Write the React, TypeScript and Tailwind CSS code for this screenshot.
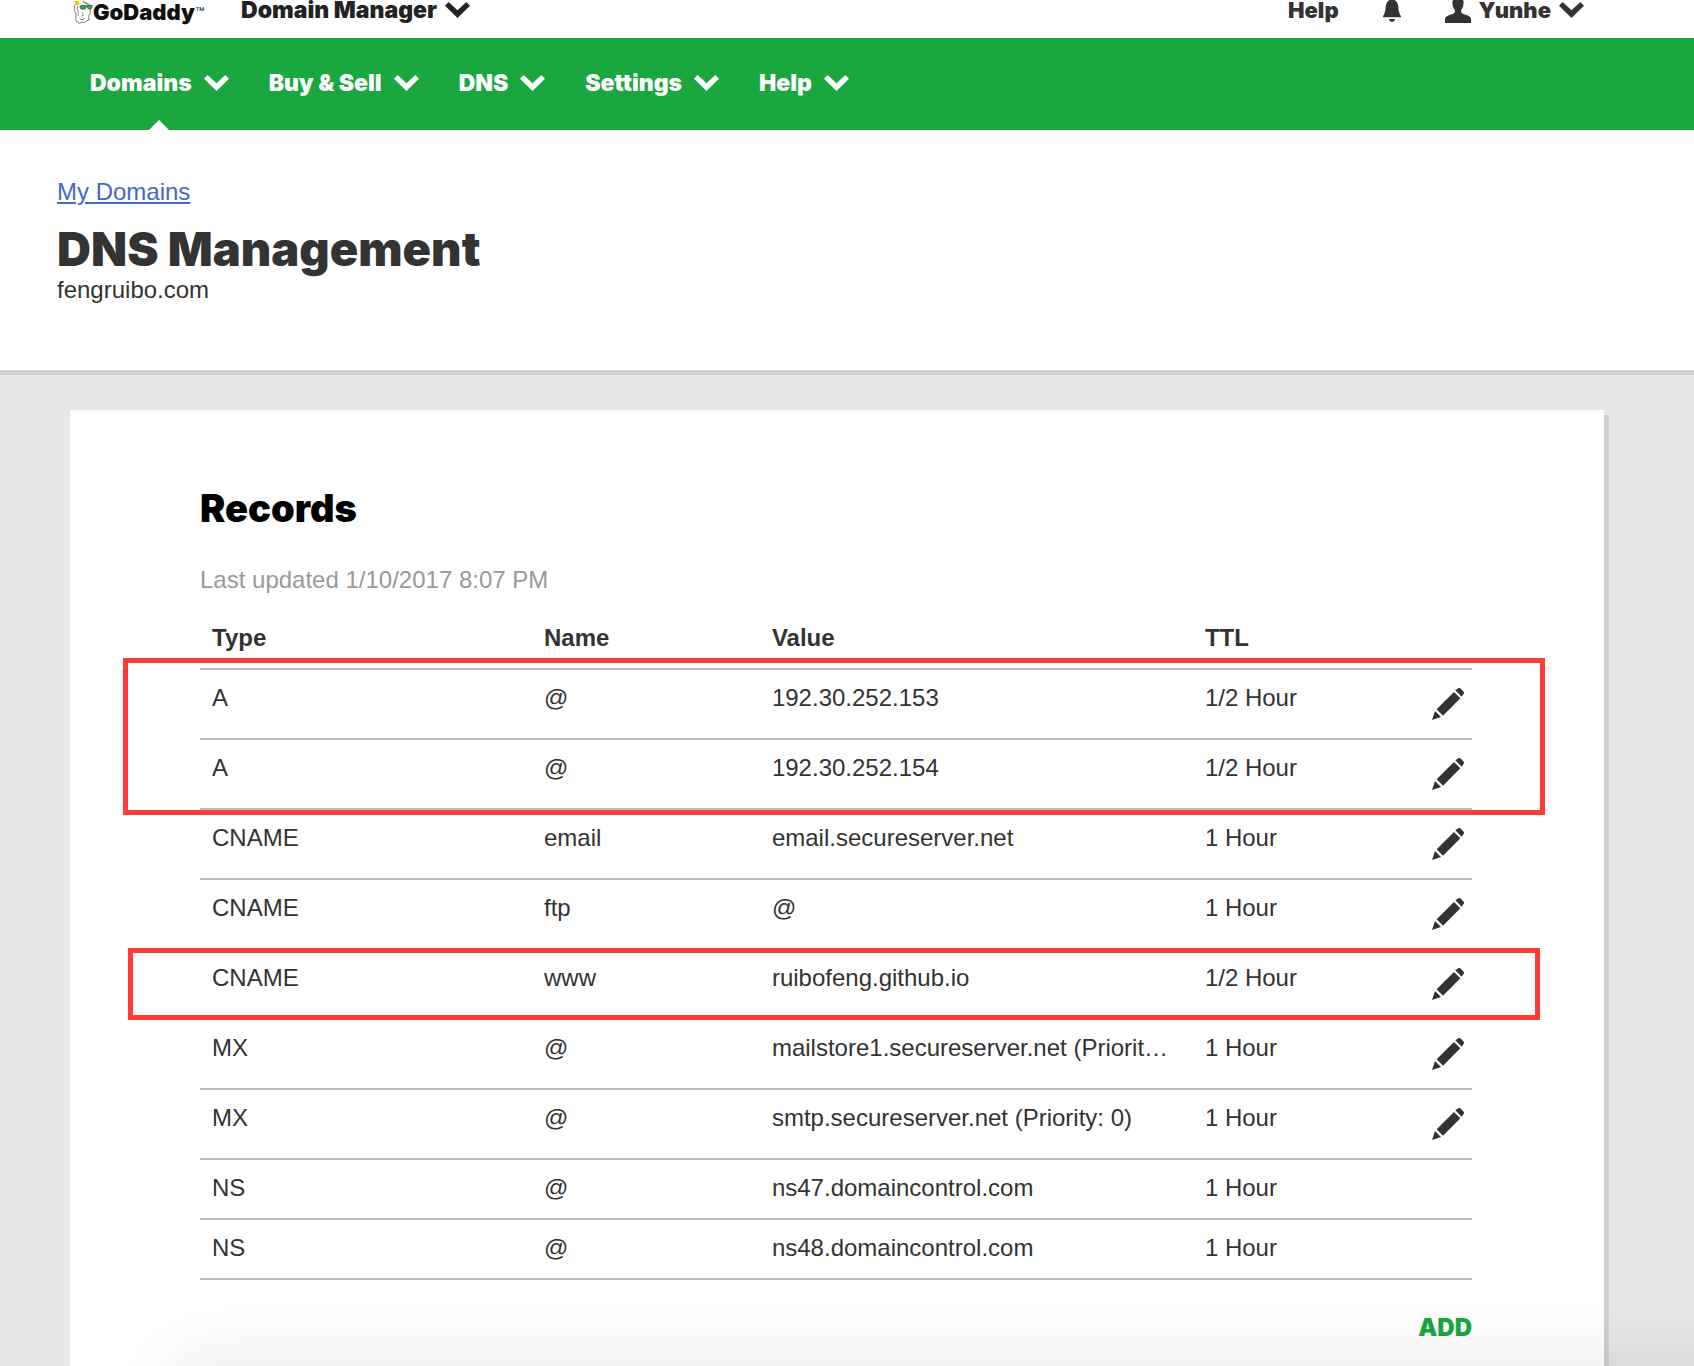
type DnsRecord = {
  type: string;
  name: string;
  value: string;
  ttl: string;
  editable: boolean;
};

const records: DnsRecord[] = [
  { type: "A", name: "@", value: "192.30.252.153", ttl: "1/2 Hour", editable: true },
  { type: "A", name: "@", value: "192.30.252.154", ttl: "1/2 Hour", editable: true },
  { type: "CNAME", name: "email", value: "email.secureserver.net", ttl: "1 Hour", editable: true },
  { type: "CNAME", name: "ftp", value: "@", ttl: "1 Hour", editable: true },
  { type: "CNAME", name: "www", value: "ruibofeng.github.io", ttl: "1/2 Hour", editable: true },
  { type: "MX", name: "@", value: "mailstore1.secureserver.net (Priority: 10)", ttl: "1 Hour", editable: true },
  { type: "MX", name: "@", value: "smtp.secureserver.net (Priority: 0)", ttl: "1 Hour", editable: true },
  { type: "NS", name: "@", value: "ns47.domaincontrol.com", ttl: "1 Hour", editable: false },
  { type: "NS", name: "@", value: "ns48.domaincontrol.com", ttl: "1 Hour", editable: false },
];

const navItems = ["Domains", "Buy & Sell", "DNS", "Settings", "Help"];

function Chevron() {
  return (
    <svg viewBox="0 0 75 48" className="h-4 w-[25px] shrink-0" fill="currentColor" aria-hidden="true">
      <path d="M0 11 11 0 37.500 25 64 0 75 11 37.500 48Z" />
    </svg>
  );
}

function Pencil() {
  return (
    <svg viewBox="0 0 96 96" className="size-8" fill="currentColor" aria-hidden="true">
      <path d="M66 12 85 31 33 83 14 64Z" />
      <path d="M79 1Q82-2 85 1L95 11Q98 14 95 17L89 26 70 7Z" />
      <path d="M0 96 9 69 27 87Z" />
    </svg>
  );
}

function Bell() {
  return (
    <svg viewBox="0 0 54 72" className="h-6 w-[18px]" fill="currentColor" aria-hidden="true">
      <path d="M27 0Q32 0 32 5Q44 10 46 26Q47 46 54 54V58H0V54Q7 46 8 26Q10 10 22 5Q22 0 27 0Z" />
      <path d="M17 63H37Q34 72 27 72Q20 72 17 63Z" />
    </svg>
  );
}

function Person() {
  return (
    <svg viewBox="0 0 78 75" className="h-[25px] w-[26px]" fill="currentColor" aria-hidden="true">
      <path d="M39 0Q56 0 56 14Q56 26 49 35Q47 40 50 45Q53 48 64 51Q78 55 78 64V75H0V64Q0 55 14 51Q25 48 28 45Q31 40 29 35Q22 26 22 14Q22 0 39 0Z" />
    </svg>
  );
}

function Mascot() {
  return (
    <svg viewBox="0 0 60 69" className="h-[23px] w-5" aria-hidden="true">
      <path
        d="M8 8Q2 14 5 22Q1 26 6 32L9 40 8 56Q12 65 20 67L26 63 34 65 39 60 48 57 47 44Q54 38 52 28L50 14 36 6 26-3H10Z"
        fill="#fff"
        stroke="#777"
        strokeWidth="3"
        strokeLinejoin="round"
      />
      <path d="M14 14Q10 24 16 32L15 44M27 34 31 43 25 46M20 54Q28 59 36 52M33 3Q42 4 48 10" fill="none" stroke="#888" strokeWidth="3" />
      <path d="M9-3 13 1 19-3 18 5 24 9 15 11 7 12 7 5 2 2Z" fill="#f5c518" />
      <path d="M20 17 58 14" stroke="#1d5c2c" strokeWidth="4" />
      <ellipse cx="30" cy="19" rx="9" ry="6" fill="#27b24a" stroke="#1d5c2c" strokeWidth="2" />
      <ellipse cx="50" cy="18" rx="7" ry="6" fill="#27b24a" stroke="#1d5c2c" strokeWidth="2" />
    </svg>
  );
}

export default function App() {
  return (
    <div className="relative flex min-h-screen flex-col overflow-hidden bg-[#e7e7e7] font-['Liberation_Sans',Arial,sans-serif] text-2xl text-[#333]">
      <header className="h-[38px] bg-white pr-[110px] pl-[73px] font-['Inter',sans-serif] text-[23px] leading-5 font-black">
        <div className="flex h-5 items-center">
          <a href="#" aria-label="GoDaddy home" className="flex items-center pt-1 text-[22px] leading-5 text-[#111]">
            <Mascot />
            <span>GoDaddy</span>
            <span className="self-start font-['Liberation_Sans',Arial,sans-serif] text-[10px] leading-5 font-normal">™</span>
          </a>
          <button type="button" className="ml-9 flex items-center gap-2 text-[#222]">
            Domain Manager
            <Chevron />
          </button>
          <div className="ml-auto flex items-center gap-11 text-[22px] leading-5">
            <a href="#">Help</a>
            <button type="button" aria-label="Notifications">
              <Bell />
            </button>
            <button type="button" className="flex items-center gap-2">
              <Person />
              Yunhe
              <Chevron />
            </button>
          </div>
        </div>
      </header>

      <nav className="h-[92px] bg-[#1aa73f] px-[90px] font-['Inter',sans-serif] text-[23px] font-black text-white">
        <ul className="flex h-full gap-10">
          {navItems.map((item, i) => (
            <li key={item} className="relative flex">
              <button type="button" className="flex items-center gap-3 pb-0.5 whitespace-nowrap">
                {item}
                <Chevron />
              </button>
              {i === 0 && (
                <svg viewBox="0 0 20 10" className="absolute bottom-0 left-1/2 h-2.5 w-5 -translate-x-1/2" fill="#fff" aria-hidden="true">
                  <path d="M0 10 10 0 20 10Z" />
                </svg>
              )}
            </li>
          ))}
        </ul>
      </nav>

      <section className="border-b-[5px] border-[#cfcfcf] bg-white px-[57px] pt-[46px] pb-16">
        <a href="#" className="block w-fit leading-8 text-[#4567cd] underline decoration-2 underline-offset-2">
          My Domains
        </a>
        <h1 className="mt-4 font-['Inter',sans-serif] text-[47px] leading-[50px] font-black">DNS Management</h1>
        <p className="leading-8">fengruibo.com</p>
      </section>

      <main className="flex flex-1 flex-col pt-[35px] pr-[90px] pl-[70px]">
        <section className="flex-1 bg-white pt-[78px] pr-[132px] pl-[130px] shadow-[5px_5px_0_#cfcfcf]">
          <h2 className="font-['Inter',sans-serif] text-[38px] leading-10 font-black text-black">Records</h2>
          <p className="mt-9 leading-8 text-[#999]">Last updated 1/10/2017 8:07 PM</p>

          <div className="relative mt-3">
            <table className="w-full table-fixed border-separate border-spacing-0 text-left leading-8">
              <colgroup>
                <col className="w-[26.1%]" />
                <col className="w-[17.92%]" />
                <col className="w-[34.04%]" />
                <col className="w-[13%]" />
                <col />
              </colgroup>
              <thead>
                <tr>
                  {["Type", "Name", "Value", "TTL"].map((label) => (
                    <th key={label} scope="col" className="border-b-2 border-[#bbb] px-3 py-[14px] font-bold">
                      {label}
                    </th>
                  ))}
                  <td className="border-b-2 border-[#bbb]" />
                </tr>
              </thead>
              <tbody>
                {records.map((r) => (
                  <tr key={r.type + r.name + r.value} className="align-top">
                    <td className="border-b-2 border-[#bbb] px-3 pt-3 pb-[14px]">{r.type}</td>
                    <td className="border-b-2 border-[#bbb] px-3 pt-3 pb-[14px]">{r.name}</td>
                    <td className="truncate border-b-2 border-[#bbb] pt-3 pr-6 pb-[14px] pl-3">{r.value}</td>
                    <td className="border-b-2 border-[#bbb] px-3 pt-3 pb-[14px] whitespace-nowrap">{r.ttl}</td>
                    <td className="border-b-2 border-[#bbb] pr-2">
                      {r.editable && (
                        <button type="button" aria-label={`Edit ${r.type} record ${r.name}`} className="ml-auto flex h-[68px] items-center">
                          <Pencil />
                        </button>
                      )}
                    </td>
                  </tr>
                ))}
              </tbody>
            </table>
            <div className="pointer-events-none absolute top-[50px] -right-[73px] -left-[77px] h-[157px] border-5 border-[#ff3b37]" />
            <div className="pointer-events-none absolute top-[340px] -right-[68px] -left-[72px] h-[72px] border-5 border-[#ff3b37]" />
          </div>

          <div className="mt-7 flex justify-end">
            <button type="button" className="h-10 font-['Inter',sans-serif] text-2xl font-black text-[#1aa73f]">
              ADD
            </button>
          </div>
        </section>
      </main>

      <div className="pointer-events-none absolute inset-x-0 bottom-0 h-28 overflow-hidden">
        <div className="absolute top-full -right-40 left-[180px] h-40 shadow-[0_0_72px_rgba(0,0,0,0.11)]" />
      </div>
    </div>
  );
}
